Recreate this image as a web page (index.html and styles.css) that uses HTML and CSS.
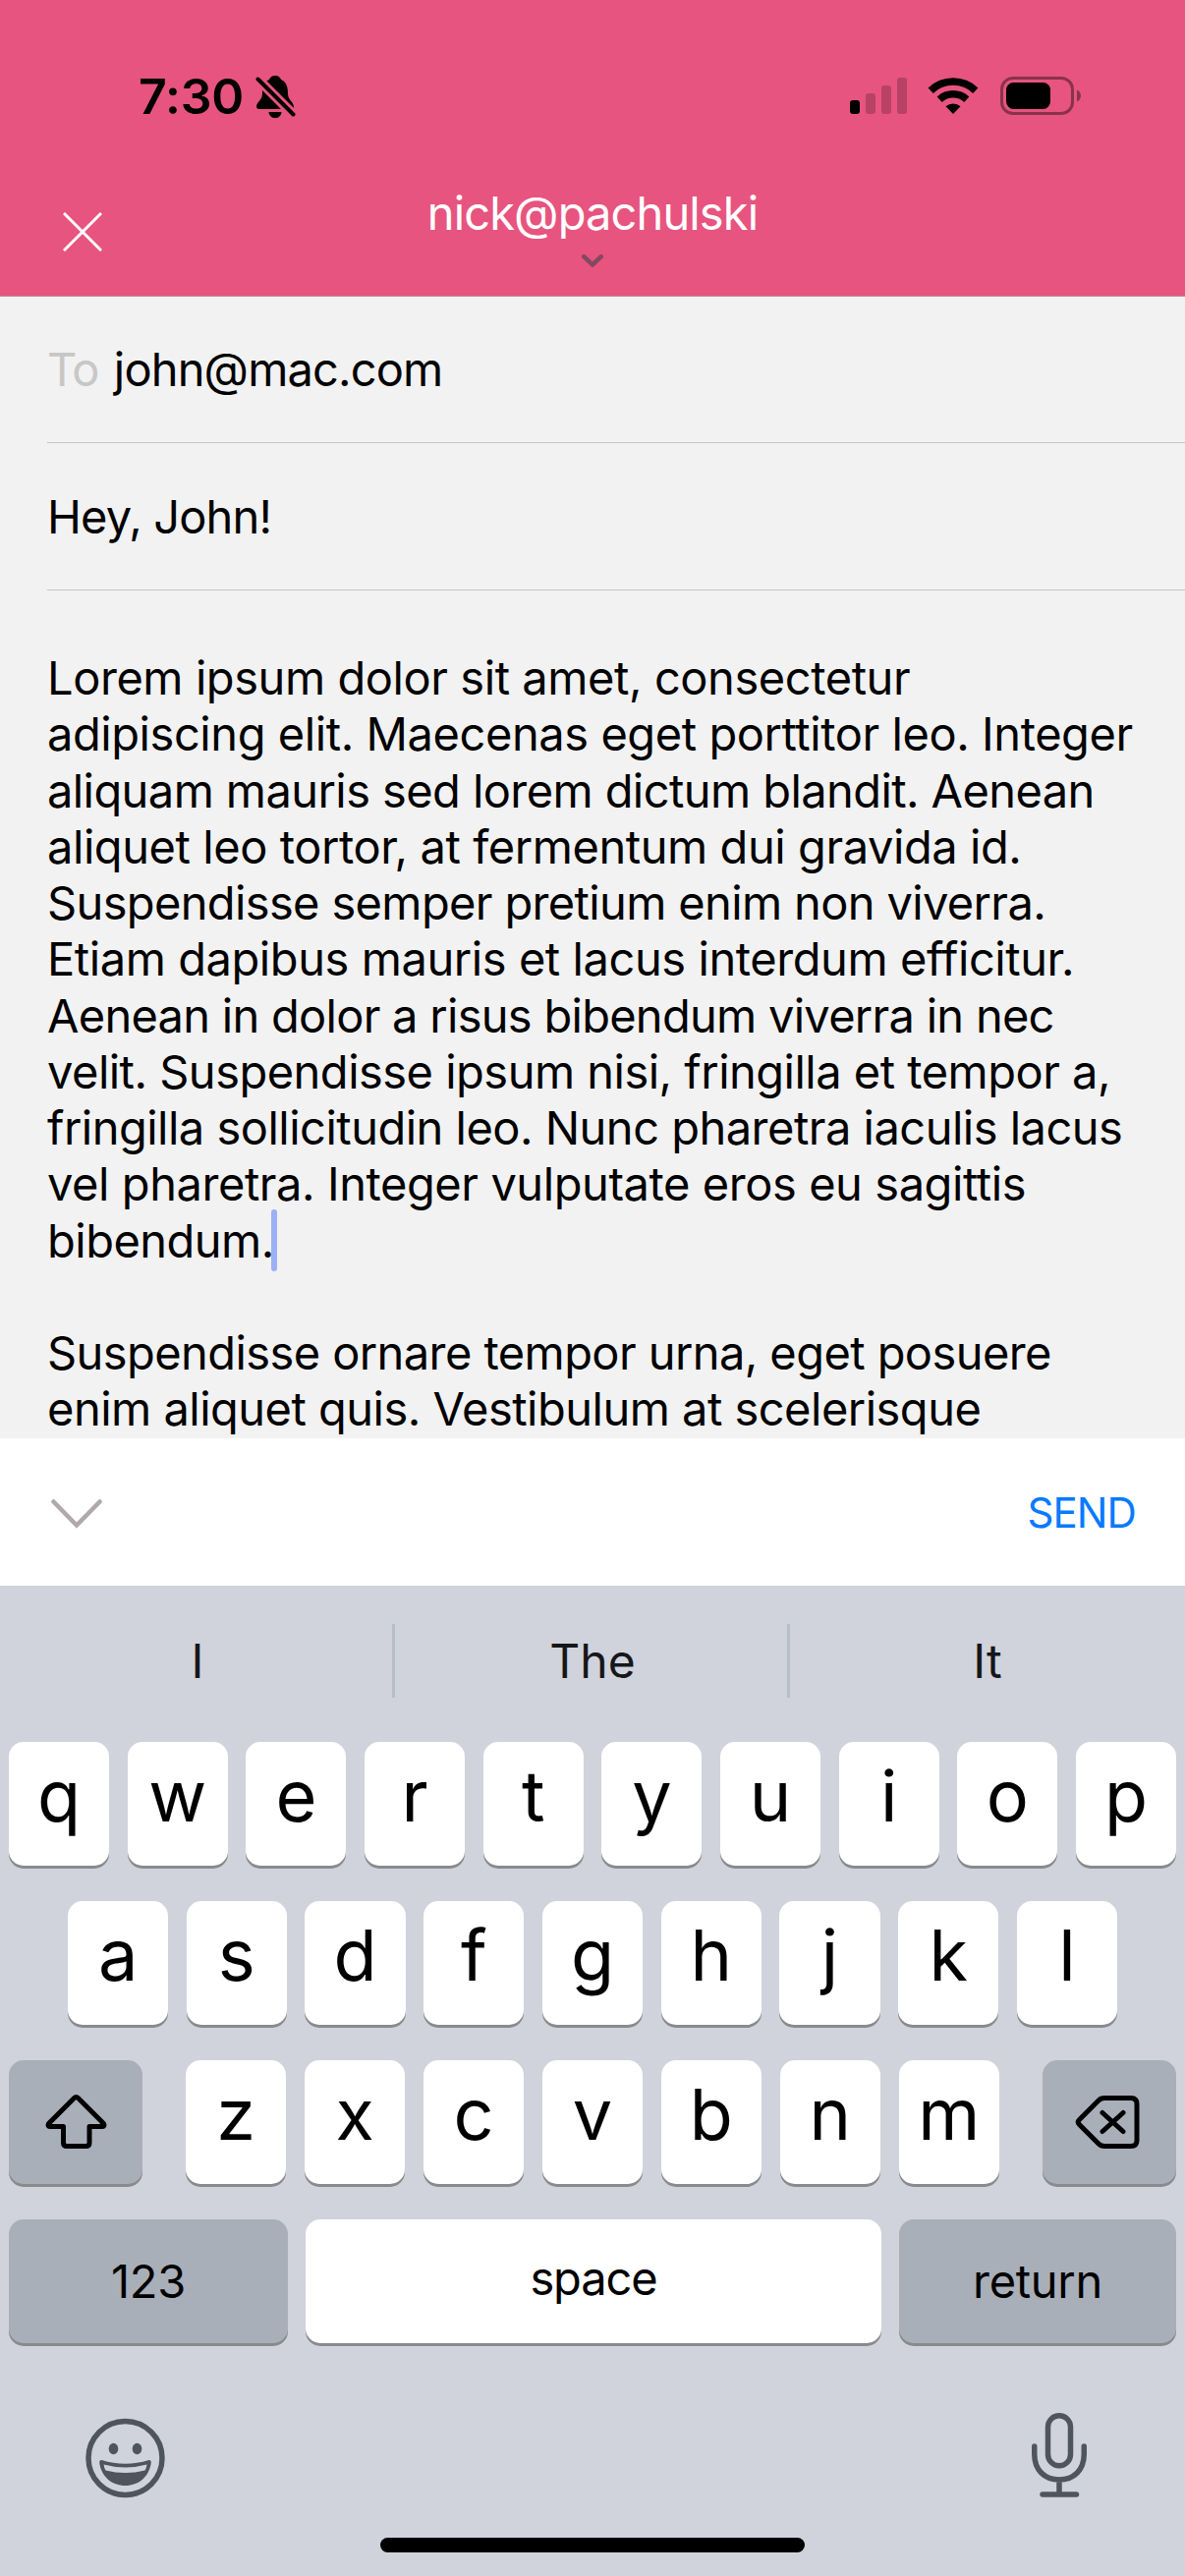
FILE: index.html
```html
<!DOCTYPE html>
<html lang="en">
<head>
<meta charset="utf-8">
<title>New message</title>
<link rel="stylesheet" href="styles.css">
</head>
<body>
<div class="screen">
  <header class="header">
    <div class="status">
      <div class="status-left">
        <span class="time">7:30</span>
        <svg class="bell" width="42" height="46" viewBox="0 0 42 46">
          <path d="M20 2C23 2 25 3.500 26 6C31 8 33 13 33 20C33 27 38 28 39 33C39 35 38 36 36 36H4C2 36 1 35 1 33C2 28 7 27 7 20C7 13 9 8 14 6C15 3.500 17 2 20 2Z"/>
          <path d="M13.500 39H26.500C26 43 23.500 45 20 45S14 43 13.500 39Z"/>
          <path class="bell-gap" d="M2 5L39 42"/>
          <path class="bell-slash" d="M2.500 5.500L38.500 41.500"/>
        </svg>
      </div>
      <div class="status-right">
        <svg class="signal" width="58" height="38" viewBox="0 0 58 38">
          <rect x="0" y="23" width="10" height="14" rx="3"/>
          <g opacity=".2"><rect x="16" y="16" width="10" height="21" rx="3"/><rect x="32" y="8" width="10" height="29" rx="3"/><rect x="48" y="0" width="10" height="37" rx="3"/></g>
        </svg>
        <svg class="wifi" width="52" height="38" viewBox="0 0 52 38">
          <path d="M26 37L18.500 29.200A11.500 11.500 0 0 1 33.500 29.200Z"/>
          <path class="arc" d="M12.200 22.200A20.500 20.500 0 0 1 39.800 22.200M3.200 13.200A33 33 0 0 1 48.800 13.200"/>
        </svg>
        <svg width="82" height="39" viewBox="0 0 82 39">
          <rect class="battery-case" x="1.500" y="1.500" width="72" height="36" rx="11.500"/>
          <rect x="6" y="6" width="45" height="27" rx="7.500"/>
          <path class="battery-cap" d="M78 13.500C80.500 14.500 82 17 82 19.500S80.500 24.500 78 25.500Z"/>
        </svg>
      </div>
    </div>
    <div class="nav">
      <svg class="close" width="40" height="40" viewBox="0 0 40 40"><path d="M1 1L39 39M39 1L1 39"/></svg>
      <div class="account">
        <span class="account-name">nick@pachulski</span>
        <svg class="account-arrow" width="22" height="13" viewBox="0 0 22 13"><path d="M2.200 2.200L11 10.500L19.800 2.200"/></svg>
      </div>
    </div>
  </header>

  <main class="compose">
    <div class="field"><span class="label">To</span><span class="recipient">john@mac.com</span></div>
    <div class="field"><span class="subject">Hey, John!</span></div>
    <div class="message">
      <p>
        <span class="ln">Lorem ipsum dolor sit amet, consectetur</span>
        <span class="ln">adipiscing elit. Maecenas eget porttitor leo. Integer</span>
        <span class="ln snug">aliquam mauris sed lorem dictum blandit. Aenean</span>
        <span class="ln">aliquet leo tortor, at fermentum dui gravida id.</span>
        <span class="ln tight">Suspendisse semper pretium enim non viverra.</span>
        <span class="ln">Etiam dapibus mauris et lacus interdum efficitur.</span>
        <span class="ln tighter">Aenean in dolor a risus bibendum viverra in nec</span>
        <span class="ln even">velit. Suspendisse ipsum nisi, fringilla et tempor a,</span>
        <span class="ln even">fringilla sollicitudin leo. Nunc pharetra iaculis lacus</span>
        <span class="ln">vel pharetra. Integer vulputate eros eu sagittis</span>
        <span class="ln even">bibendum.<i class="caret"></i></span>
      </p>
      <p>
        <span class="ln snug">Suspendisse ornare tempor urna, eget posuere</span>
        <span class="ln even">enim aliquet quis. Vestibulum at scelerisque</span>
      </p>
    </div>
  </main>

  <div class="toolbar">
    <svg class="dismiss" width="52" height="30" viewBox="0 0 52 30"><path d="M2.500 2.500L26 26.500L49.500 2.500"/></svg>
    <span class="send">SEND</span>
  </div>

  <section class="keyboard">
    <div class="suggestions"><span>I</span><span>The</span><span>It</span></div>
    <div class="keys">
      <div class="row"><span class="key">q</span><span class="key">w</span><span class="key">e</span><span class="key">r</span><span class="key">t</span><span class="key">y</span><span class="key">u</span><span class="key">i</span><span class="key">o</span><span class="key">p</span></div>
      <div class="row row-middle"><span class="key">a</span><span class="key">s</span><span class="key">d</span><span class="key">f</span><span class="key">g</span><span class="key">h</span><span class="key">j</span><span class="key">k</span><span class="key">l</span></div>
      <div class="row row-lower">
        <span class="key key-mod"><svg width="64" height="64" viewBox="0 0 64 64"><path d="M30.500 7.500Q32.500 5.500 34.500 7.500L60.500 33.500Q62 36.500 58.500 36.500H46V53Q46 56.500 42.500 56.500H23Q19.500 56.500 19.500 53V36.500H6.500Q3 36.500 4.500 33.500Z"/></svg></span>
        <div class="row letters"><span class="key">z</span><span class="key">x</span><span class="key">c</span><span class="key">v</span><span class="key">b</span><span class="key">n</span><span class="key">m</span></div>
        <span class="key key-mod key-delete"><svg width="66" height="64" viewBox="0 0 66 64"><path d="M30 7.500H57Q63 7.500 63 13.500V50.500Q63 56.500 57 56.500H30Q26.500 56.500 24 54L4.500 34.500Q2 32 4.500 29.500L24 10Q26.500 7.500 30 7.500ZM28 22.500L49 41.500M49 22.500L28 41.500"/></svg></span>
      </div>
      <div class="row row-bottom">
        <span class="key key-text key-numbers">123</span><span class="key key-text key-space">space</span><span class="key key-text">return</span>
      </div>
    </div>
    <div class="dock">
      <svg class="emoji" width="81" height="82" viewBox="0 0 81 82">
        <circle class="line" cx="40.500" cy="41" r="37.500"/>
        <ellipse cx="28.500" cy="31.500" rx="4.800" ry="5.800"/><ellipse cx="52.500" cy="31.500" rx="4.800" ry="5.800"/>
        <path fill-rule="evenodd" d="M16.500 43Q40.500 50.500 64.500 43Q67 42.500 66.800 45.500C65 60 54 69 40.500 69S16 60 14.200 45.500Q14 42.500 16.500 43ZM18.500 47.500Q19 51 20.500 53.500Q40.500 58.500 60.500 53.500Q62 51 62.500 47.500Q40.500 53.500 18.500 47.500Z"/>
      </svg>
      <svg width="56" height="87" viewBox="0 0 56 87">
        <rect class="line" x="16.500" y="2.750" width="23" height="51" rx="11.500"/>
        <path class="line" d="M2.750 34V42C2.750 58 13 68 28 68S53.250 58 53.250 42V34M28 68V83M11 83H45.500"/>
      </svg>
    </div>
    <div class="home"></div>
  </section>
</div>
</body>
</html>
```
FILE: styles.css
```css
* { box-sizing: border-box; }
body { margin: 0; font-family: Inter, "Liberation Sans", sans-serif; font-size: 47px; color: #000; }
svg { display: block; flex: none; }
.screen { width: 1206px; height: 2622px; display: flex; flex-direction: column; overflow: hidden; background: #f2f2f2; }

.header { height: 302px; background: #e7547f; border-bottom: 1px solid #b9929e; }
.status { height: 170px; padding: 66px 106px 0 141px; display: flex; justify-content: space-between; align-items: flex-start; }
.status-left { display: flex; align-items: center; gap: 12px; }
.time { font-size: 50px; line-height: 64px; font-weight: 600; letter-spacing: -.2px; }
.bell-gap { stroke: #e7547f; stroke-width: 10; }
.bell-slash { stroke: #000; stroke-width: 4; stroke-linecap: round; }
.status-right { display: flex; gap: 22px; padding-top: 12px; align-items: center; }
.signal { margin-right: -1px; }
.arc { fill: none; stroke: #000; stroke-width: 7.500; }
.battery-case { fill: none; stroke: #000; stroke-opacity: .4; stroke-width: 3; }
.battery-cap { fill-opacity: .4; }
.nav { height: 131px; display: grid; grid-template-columns: 200px 1fr 200px; padding-top: 17px; }
.close { margin: 29px 0 0 64px; fill: none; stroke: #fff; stroke-width: 3; }
.account { display: flex; flex-direction: column; align-items: center; padding-top: 1px; }
.account-name { color: #fff; line-height: 58px; letter-spacing: -.880px; }
.account-arrow { margin-top: 13px; fill: none; stroke: #83495f; stroke-width: 4.500; stroke-linecap: round; }

.compose { height: 1162px; overflow: hidden; padding-left: 48px; }
.field { height: 149px; border-bottom: 1px solid #c6c6c6; display: flex; align-items: center; gap: 16px; letter-spacing: -.850px; padding-bottom: 1px; }
.field + .field { height: 150px; padding: 0; }
.label { color: #c7c7c7; letter-spacing: -1.500px; }
.message { padding-top: 60px; line-height: 57.270px; letter-spacing: -.430px; white-space: nowrap; }
.message p { margin: 0 0 57.270px; }
.message p:last-child { margin: 0; }
.ln { display: block; position: relative; width: max-content; }
.even { letter-spacing: -.510px; }
.snug { letter-spacing: -.580px; }
.tight { letter-spacing: -.640px; }
.tighter { letter-spacing: -.720px; }
.caret { position: absolute; top: -3px; right: -3px; width: 6px; height: 63px; border-radius: 3px; background: #9bb0f5; }

.toolbar { height: 150px; background: #fff; display: flex; justify-content: space-between; align-items: center; padding: 0 50px 0 52px; }
.dismiss { margin-top: 4px; fill: none; stroke: #b0a8aa; stroke-width: 4.500; stroke-linecap: round; }
.send { color: #087aff; font-size: 42px; letter-spacing: -.900px; }

.keyboard { flex: 1; background: #d0d3db; display: flex; flex-direction: column; }
.suggestions { height: 159px; display: grid; grid-template-columns: repeat(3, 1fr); padding: 39px 0 45px; color: #16171a; font-size: 48px; }
.suggestions span { display: flex; align-items: center; justify-content: center; box-shadow: inset -3px 0 0 #b9bdc7; }
.suggestions span:last-child { box-shadow: none; }
.keys { display: flex; flex-direction: column; gap: 36px; padding: 0 9px; }
.row { display: flex; gap: 18.500px; height: 126px; }
.row-middle { padding: 0 60px; }
.row-lower { justify-content: space-between; gap: 44px; }
.letters { flex: 1; }
.key { flex: 1; min-width: 0; height: 126px; display: flex; align-items: center; justify-content: center; border-radius: 15px; background: #fff; box-shadow: 0 3px 0 #898a8d; font-size: 72px; font-weight: 400; padding-bottom: 18px; }
.key-mod { flex: 0 0 136px; background: #a9afb9; padding: 0; }
.key-mod svg { fill: none; stroke: #000; stroke-width: 5; stroke-linecap: round; stroke-linejoin: round; }
.key-delete { padding-right: 5px; }
.key-text { flex: 0 0 282px; font-size: 47px; letter-spacing: -.300px; padding: 0 0 2px; background: #a9afb9; }
.key-numbers { flex-basis: 284px; }
.key-space { flex: 1; background: #fff; padding-bottom: 8px; letter-spacing: -1.100px; }
.row-bottom { gap: 18px; }
.dock { display: flex; justify-content: space-between; padding: 71px 100px 0 87px; fill: #50545d; }
.dock .line { fill: none; stroke: #50545d; stroke-width: 5.500; stroke-linecap: round; }
.emoji { margin-top: 5px; }
.home { width: 432px; height: 15px; border-radius: 8px; background: #000; margin: auto auto 24px; }
```
